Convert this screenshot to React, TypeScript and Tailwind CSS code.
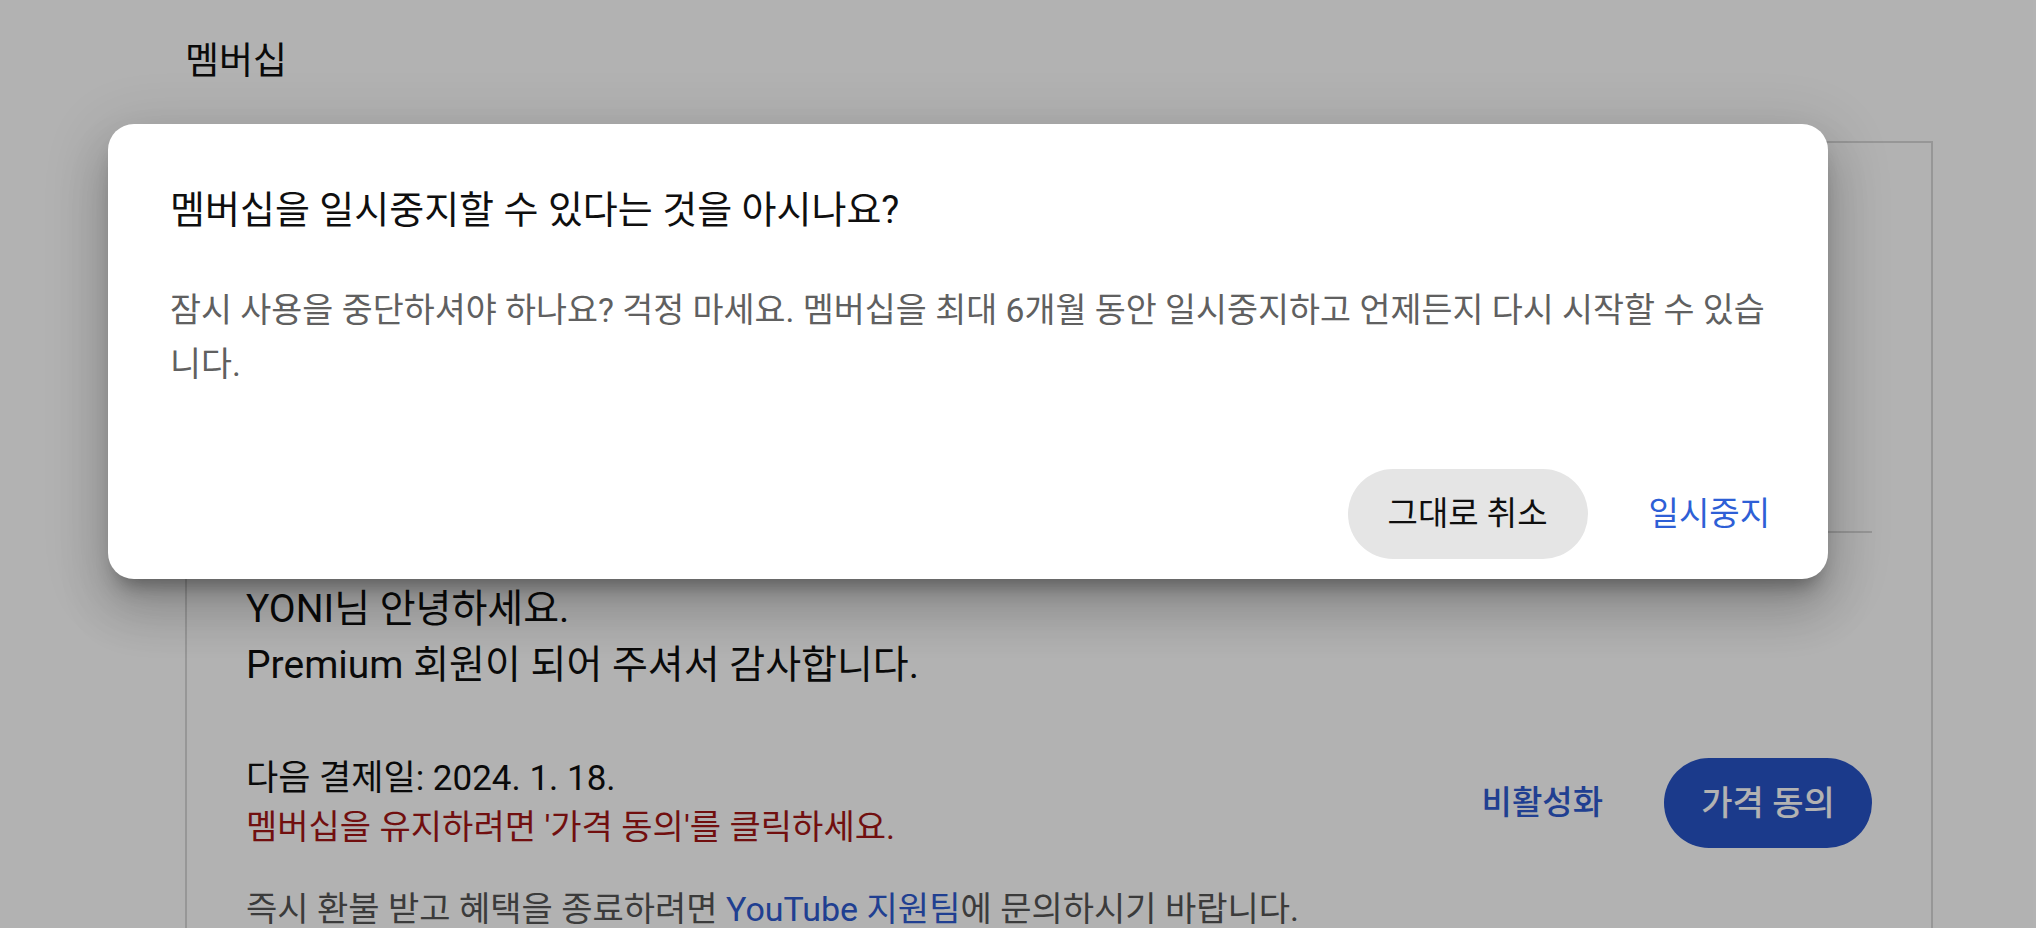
import React from "react";

const FONT = "font-['Roboto','Noto_Sans_CJK_KR',sans-serif]";

export default function App(): JSX.Element {
  return (
    <div className={`relative h-[928px] w-full overflow-hidden bg-white text-[#0f0f0f] ${FONT}`}>
      {/* page behind the dialog */}
      <main className="pl-[185px] pr-[103px] pt-[38px]">
        <h1 className="text-[37px] leading-[48px]">멤버십</h1>

        <section className="mt-[55px] border-2 border-[#d9d9d9] px-[59px]">
          {/* membership summary, hidden behind the dialog */}
          <div className="h-[390px] border-b-2 border-[#d9d9d9]" />

          <div className="pt-[48px] text-[39px] leading-[56px]">
            <p>YONI님 안녕하세요.</p>
            <p>Premium 회원이 되어 주셔서 감사합니다.</p>
          </div>

          <div className="mt-[62px] flex items-center justify-between">
            <div className="leading-[48px]">
              <p className="text-[35px]">다음 결제일: 2024. 1. 18.</p>
              <p className="text-[34px] text-[#a31616]">멤버십을 유지하려면 '가격 동의'를 클릭하세요.</p>
            </div>
            <div className="flex items-center">
              <button className="mr-[61px] text-[33px] font-medium text-[#2e5bd0]">비활성화</button>
              <button className="h-[90px] w-[208px] rounded-full bg-[#2853c8] text-[34px] font-medium text-white">
                가격 동의
              </button>
            </div>
          </div>

          <p className="mt-[34px] text-[34px] leading-[48px] text-[#555555]">
            즉시 환불 받고 혜택을 종료하려면 <span className="text-[#2e5bd0]">YouTube 지원팀</span>에
            문의하시기 바랍니다.
          </p>
        </section>
      </main>

      {/* backdrop + dialog */}
      <div className="absolute inset-0 bg-black/30">
        <div className="absolute left-[108px] top-[124px] flex h-[455px] w-[1720px] flex-col rounded-[26px] bg-white shadow-[0_32px_48px_4px_rgba(0,0,0,0.14),0_12px_60px_10px_rgba(0,0,0,0.12),0_16px_20px_-10px_rgba(0,0,0,0.35)]">
          <div className="px-[62px] pt-[62px]">
            <h2 className="text-[38px] leading-[48px] text-[#0f0f0f]">
              멤버십을 일시중지할 수 있다는 것을 아시나요?
            </h2>
            <p className="mt-[50px] whitespace-nowrap text-[33.7px] leading-[54px] text-[#606060]">
              잠시 사용을 중단하셔야 하나요? 걱정 마세요. 멤버십을 최대 6개월 동안 일시중지하고 언제든지 다시 시작할 수 있습
              <br />
              니다.
            </p>
          </div>

          <div className="mt-auto flex items-center justify-end gap-[37px] pb-[20px] pr-[34px]">
            <button className="h-[90px] w-[240px] rounded-full bg-[#e5e5e5] text-[33px] text-[#0f0f0f]">
              그대로 취소
            </button>
            <button className="h-[90px] px-[24px] text-[33px] text-[#2e5fd6]">일시중지</button>
          </div>
        </div>
      </div>
    </div>
  );
}
